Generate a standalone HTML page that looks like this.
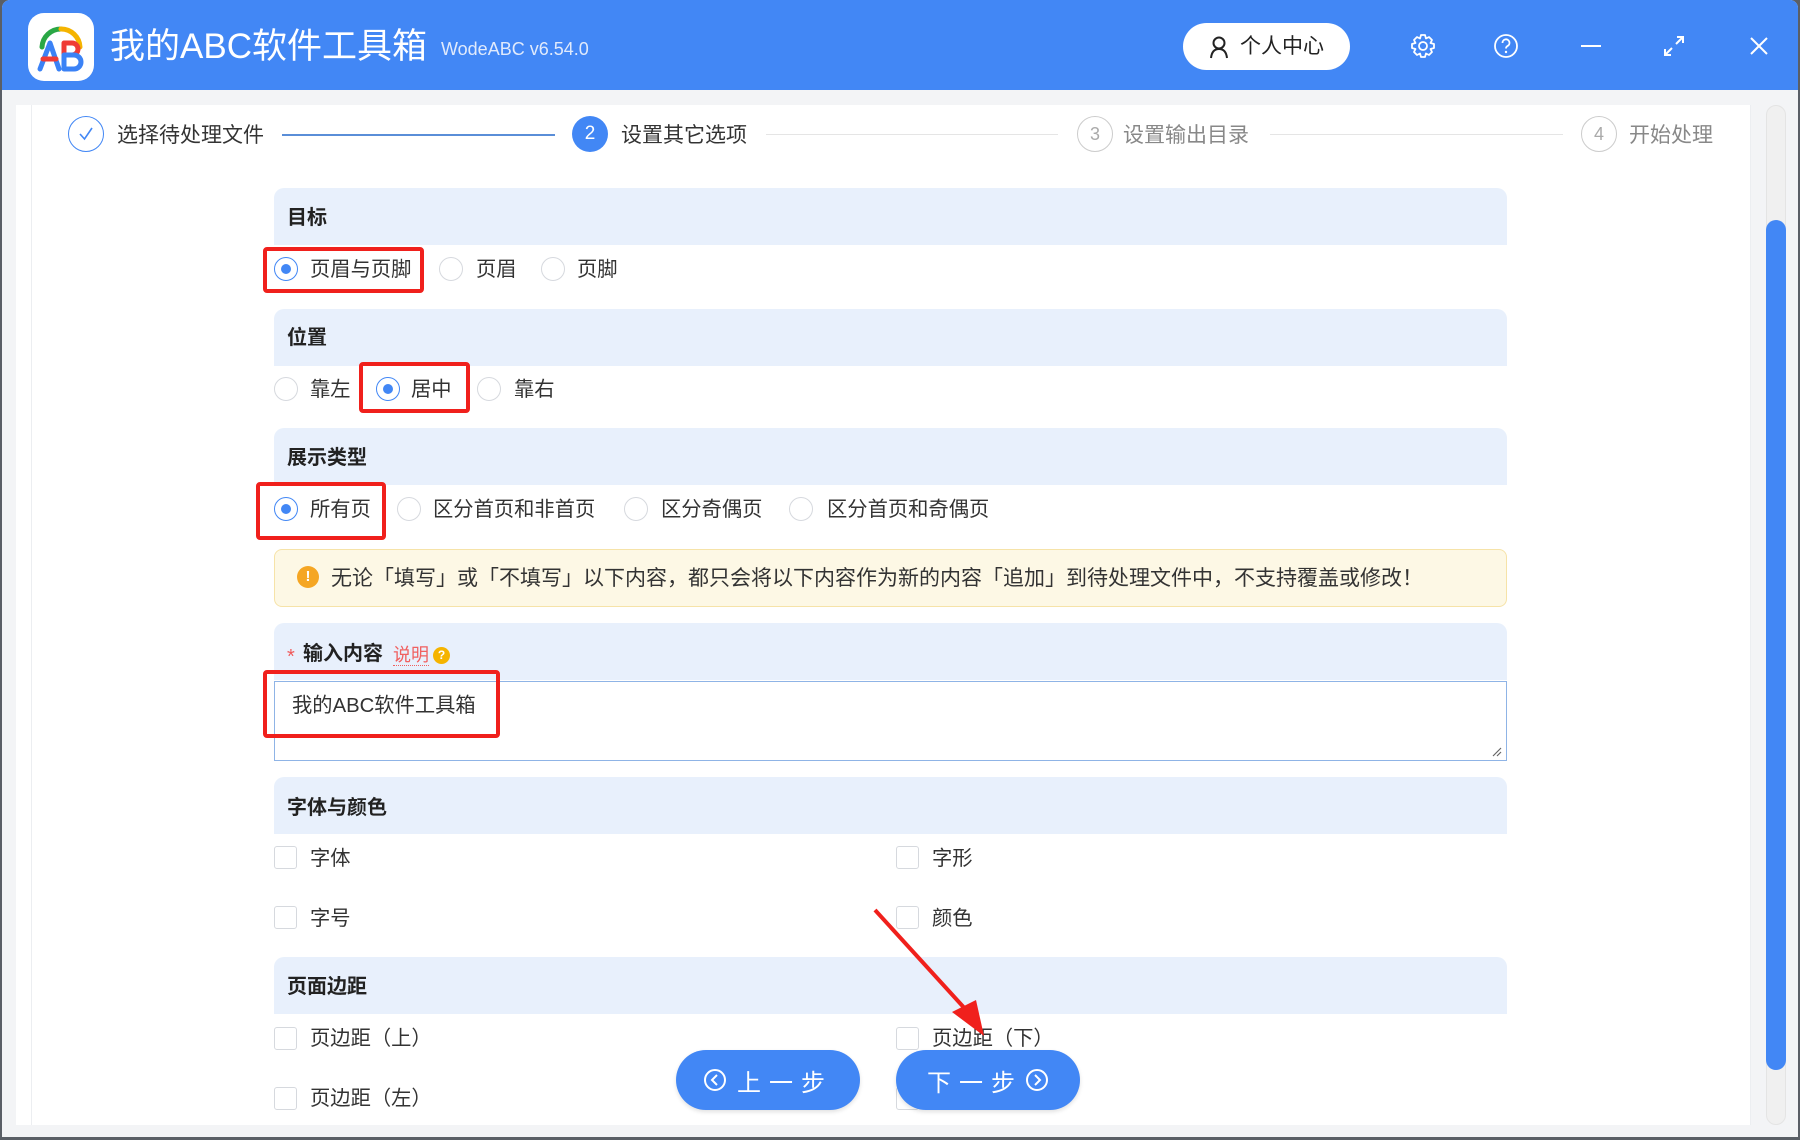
<!DOCTYPE html>
<html><head><meta charset="utf-8"><style>
*{box-sizing:border-box;margin:0;padding:0}
body{width:1800px;height:1140px;overflow:hidden;background:#5a5f66;font-family:"Liberation Sans","Noto Sans CJK SC",sans-serif;position:relative}
.a{position:absolute}
.win{left:2px;top:0;width:1796px;height:1137px;background:#f3f4f6;border-radius:8px 8px 0 0;overflow:hidden}
.tb{left:0;top:0;width:1800px;height:90px;background:#4287f5}
.panel{left:16px;top:105px;width:1734px;height:1020px;background:#fff}
.t{white-space:nowrap;line-height:1}
.hd{left:274px;width:1233px;height:57px;background:#e8f0fc;border-radius:10px 10px 0 0}
.hl{font-size:20px;font-weight:bold;color:#222}
.rad{width:24px;height:24px;border:1px solid #d6d9de;border-radius:50%;background:#fff}
.rad.on{border-color:#4287f5}
.rad.on::after{content:"";position:absolute;left:6px;top:6px;width:10px;height:10px;border-radius:50%;background:#4287f5}
.lb{font-size:20.3px;color:#333}
.cb{width:23px;height:23px;border:1px solid #d6d9de;border-radius:3px;background:#fff}
.red{border:4px solid #f0201c;border-radius:4px}
.btn{height:60px;width:184px;border-radius:30px;background:#4287f5;color:#fff;font-size:24px;letter-spacing:8px;display:flex;align-items:center;justify-content:center;box-shadow:0 2px 4px rgba(0,0,0,.12)}
.sc{border:1px solid #ccc;border-radius:50%}
</style></head><body>
<div class="a win">
<div class="a tb"></div>
</div>
<!-- logo -->
<div class="a" style="left:28px;top:13px;width:66px;height:68px;background:#fff;border-radius:16px"></div>
<svg class="a" style="left:28px;top:13px" width="66" height="68" viewBox="0 0 66 68">
<path d="M14 34 A19 19 0 0 1 33 16" stroke="#2aa745" stroke-width="5" fill="none" stroke-linecap="round"/>
<path d="M33 16 A19 19 0 0 1 52 34" stroke="#f5b400" stroke-width="5" fill="none" stroke-linecap="round"/>
<path d="M12 56 L22 30 L31 56" stroke="#3b82f6" stroke-width="5" fill="none" stroke-linecap="round" stroke-linejoin="round"/>
<path d="M15 46 H28" stroke="#ef3b36" stroke-width="5" stroke-linecap="round"/>
<path d="M36 30 H44 a6 6 0 0 1 0 12 H36 Z" stroke="#ef3b36" stroke-width="5" fill="none" stroke-linejoin="round"/>
<path d="M36 42 H46 a7 7 0 0 1 0 14 H36 Z" stroke="#3b82f6" stroke-width="5" fill="none" stroke-linejoin="round"/>
</svg>
<div class="a t" style="left:110px;top:29px;font-size:35px;color:#fff">我的ABC软件工具箱</div>
<div class="a t" style="left:441px;top:40px;font-size:18px;color:#e0eafc">WodeABC v6.54.0</div>
<div class="a" style="left:1183px;top:23px;width:167px;height:47px;background:#fff;border-radius:24px"></div>
<svg class="a" style="left:1208px;top:35px" width="22" height="24" viewBox="0 0 22 24"><circle cx="11" cy="8" r="5.5" stroke="#222" stroke-width="2" fill="none"/><path d="M3 23 Q4 14 11 14 Q18 14 19 23" stroke="#222" stroke-width="2" fill="none"/></svg>
<div class="a t" style="left:1240px;top:36px;font-size:21px;color:#222">个人中心</div>
<svg class="a" style="left:1410px;top:33px" width="26" height="26" viewBox="0 0 26 26"><path d="M11 2h4l1 3.5 3-1.5 3 3-1.5 3 3.5 1v4l-3.5 1 1.5 3-3 3-3-1.5-1 3.5h-4l-1-3.5-3 1.5-3-3 1.5-3-3.5-1v-4l3.5-1-1.5-3 3-3 3 1.5z" stroke="#fff" stroke-width="1.8" fill="none" stroke-linejoin="round"/><circle cx="13" cy="13" r="4" stroke="#fff" stroke-width="1.8" fill="none"/></svg>
<svg class="a" style="left:1493px;top:33px" width="26" height="26" viewBox="0 0 26 26"><circle cx="13" cy="13" r="11" stroke="#fff" stroke-width="1.8" fill="none"/><path d="M9.5 10a3.5 3.5 0 1 1 5 3c-1.2.7-1.5 1.3-1.5 2.5" stroke="#fff" stroke-width="1.8" fill="none"/><circle cx="13" cy="19" r="1.2" fill="#fff"/></svg>
<div class="a" style="left:1581px;top:45px;width:20px;height:2px;background:#fff"></div>
<svg class="a" style="left:1663px;top:35px" width="22" height="22" viewBox="0 0 22 22"><path d="M13 9 L20 2 M14 2h6v6 M9 13 L2 20 M2 14v6h6" stroke="#fff" stroke-width="2" fill="none"/></svg>
<svg class="a" style="left:1749px;top:36px" width="20" height="20" viewBox="0 0 20 20"><path d="M2 2 L18 18 M18 2 L2 18" stroke="#fff" stroke-width="2"/></svg>

<div class="a panel"></div>
<div class="a" style="left:31px;top:105px;width:1px;height:1020px;background:#eceef1"></div>
<div class="a" style="left:1750px;top:105px;width:1px;height:1020px;background:#eceef1"></div>
<div class="a" style="left:1766px;top:105px;width:20px;height:1020px;background:#f0f0f0;border-radius:10px;border:1px solid #e4e4e4"></div>
<div class="a" style="left:1766px;top:220px;width:20px;height:850px;background:#4287f5;border-radius:10px"></div>

<!-- steps -->
<div class="a" style="left:68px;top:116px;width:36px;height:36px;border:1.5px solid #4287f5;border-radius:50%"></div>
<svg class="a" style="left:76px;top:124px" width="20" height="20" viewBox="0 0 20 20"><path d="M4 10 L8.5 15 L16 4" stroke="#4287f5" stroke-width="1.6" fill="none"/></svg>
<div class="a t" style="left:117px;top:125px;font-size:21px;color:#333">选择待处理文件</div>
<div class="a" style="left:282px;top:134px;width:273px;height:2px;background:#5a8ed8"></div>
<div class="a" style="left:572px;top:116px;width:36px;height:36px;background:#4287f5;border-radius:50%;color:#fff;font-size:19px;text-align:center;line-height:36px">2</div>
<div class="a t" style="left:621px;top:125px;font-size:21px;color:#333">设置其它选项</div>
<div class="a" style="left:766px;top:134px;width:292px;height:1px;background:#e5e5e5"></div>
<div class="a sc" style="left:1077px;top:116px;width:36px;height:36px;color:#aaa;font-size:18px;text-align:center;line-height:34px">3</div>
<div class="a t" style="left:1123px;top:125px;font-size:21px;color:#888">设置输出目录</div>
<div class="a" style="left:1270px;top:134px;width:293px;height:1px;background:#e5e5e5"></div>
<div class="a sc" style="left:1581px;top:116px;width:36px;height:36px;color:#aaa;font-size:18px;text-align:center;line-height:34px">4</div>
<div class="a t" style="left:1629px;top:125px;font-size:21px;color:#888">开始处理</div>

<!-- 目标 -->
<div class="a hd" style="top:188px"></div>
<div class="a t hl" style="left:287px;top:208px">目标</div>
<div class="a rad on" style="left:274px;top:257px"></div><div class="a t lb" style="left:310px;top:260px">页眉与页脚</div>
<div class="a rad" style="left:439px;top:257px"></div><div class="a t lb" style="left:476px;top:260px">页眉</div>
<div class="a rad" style="left:541px;top:257px"></div><div class="a t lb" style="left:577px;top:260px">页脚</div>
<div class="a red" style="left:263px;top:247px;width:161px;height:46px"></div>

<!-- 位置 -->
<div class="a hd" style="top:309px"></div>
<div class="a t hl" style="left:287px;top:328px">位置</div>
<div class="a rad" style="left:274px;top:377px"></div><div class="a t lb" style="left:310px;top:380px">靠左</div>
<div class="a rad on" style="left:376px;top:377px"></div><div class="a t lb" style="left:411px;top:380px">居中</div>
<div class="a rad" style="left:477px;top:377px"></div><div class="a t lb" style="left:514px;top:380px">靠右</div>
<div class="a red" style="left:359px;top:362px;width:111px;height:51px"></div>

<!-- 展示类型 -->
<div class="a hd" style="top:428px"></div>
<div class="a t hl" style="left:287px;top:448px">展示类型</div>
<div class="a rad on" style="left:274px;top:497px"></div><div class="a t lb" style="left:310px;top:500px">所有页</div>
<div class="a rad" style="left:397px;top:497px"></div><div class="a t lb" style="left:433px;top:500px">区分首页和非首页</div>
<div class="a rad" style="left:624px;top:497px"></div><div class="a t lb" style="left:661px;top:500px">区分奇偶页</div>
<div class="a rad" style="left:789px;top:497px"></div><div class="a t lb" style="left:827px;top:500px">区分首页和奇偶页</div>
<div class="a red" style="left:256px;top:482px;width:130px;height:58px"></div>

<!-- warning -->
<div class="a" style="left:274px;top:549px;width:1233px;height:58px;background:#fdf8e5;border:1px solid #f6e3a8;border-radius:8px"></div>
<div class="a" style="left:297px;top:566px;width:22px;height:22px;border-radius:50%;background:#f5a623;color:#fff;font-size:15px;font-weight:bold;text-align:center;line-height:22px">!</div>
<div class="a t" style="left:331px;top:568px;font-size:21px;color:#333">无论「填写」或「不填写」以下内容，都只会将以下内容作为新的内容「追加」到待处理文件中，不支持覆盖或修改！</div>

<!-- 输入内容 -->
<div class="a hd" style="top:623px"></div>
<div class="a t" style="left:287px;top:647px;font-size:20px;color:#f05a5a">*</div>
<div class="a t hl" style="left:303px;top:644px">输入内容</div>
<div class="a t" style="left:393px;top:646px;font-size:18px;color:#f06060;border-bottom:1.5px dotted #f06060;padding-bottom:1px">说明</div>
<div class="a" style="left:433px;top:647px;width:17px;height:17px;border-radius:50%;background:#f5b400;color:#fff;font-size:12px;text-align:center;line-height:17px;font-weight:bold">?</div>
<div class="a" style="left:274px;top:681px;width:1233px;height:80px;border:1px solid #8fb4e6;background:#fff"></div>
<svg class="a" style="left:1490px;top:745px" width="12" height="12" viewBox="0 0 12 12"><path d="M11 3 L3 11 M11 7 L7 11" stroke="#666" stroke-width="1.2"/></svg>
<div class="a t" style="left:292px;top:696px;font-size:20.3px;color:#333">我的ABC软件工具箱</div>
<div class="a red" style="left:263px;top:670px;width:237px;height:68px"></div>

<!-- 字体与颜色 -->
<div class="a hd" style="top:777px"></div>
<div class="a t hl" style="left:287px;top:798px">字体与颜色</div>
<div class="a cb" style="left:274px;top:846px"></div><div class="a t lb" style="left:310px;top:849px">字体</div>
<div class="a cb" style="left:896px;top:846px"></div><div class="a t lb" style="left:932px;top:849px">字形</div>
<div class="a cb" style="left:274px;top:906px"></div><div class="a t lb" style="left:310px;top:909px">字号</div>
<div class="a cb" style="left:896px;top:906px"></div><div class="a t lb" style="left:932px;top:909px">颜色</div>

<!-- 页面边距 -->
<div class="a hd" style="top:957px"></div>
<div class="a t hl" style="left:287px;top:977px">页面边距</div>
<div class="a cb" style="left:274px;top:1027px"></div><div class="a t lb" style="left:310px;top:1029px">页边距（上）</div>
<div class="a cb" style="left:896px;top:1027px"></div><div class="a t lb" style="left:932px;top:1029px">页边距（下）</div>
<div class="a cb" style="left:274px;top:1087px"></div><div class="a t lb" style="left:310px;top:1089px">页边距（左）</div>
<div class="a cb" style="left:896px;top:1087px"></div>

<!-- red arrow -->
<svg class="a" style="left:0;top:0" width="1800" height="1140"><path d="M875 910 L968 1012" stroke="#f0201c" stroke-width="4"/><path d="M984 1036 L952 1012 L976 1000 Z" fill="#f0201c"/></svg>

<!-- buttons -->
<div class="a btn" style="left:676px;top:1050px"><svg width="24" height="24" viewBox="0 0 24 24" style="margin-right:10px"><circle cx="12" cy="12" r="10" stroke="#fff" stroke-width="2" fill="none"/><path d="M14 7 L9 12 L14 17" stroke="#fff" stroke-width="2" fill="none"/></svg>上一步</div>
<div class="a btn" style="left:896px;top:1050px">下一步<svg width="24" height="24" viewBox="0 0 24 24" style="margin-left:2px"><circle cx="12" cy="12" r="10" stroke="#fff" stroke-width="2" fill="none"/><path d="M10 7 L15 12 L10 17" stroke="#fff" stroke-width="2" fill="none"/></svg></div>
</body></html>
